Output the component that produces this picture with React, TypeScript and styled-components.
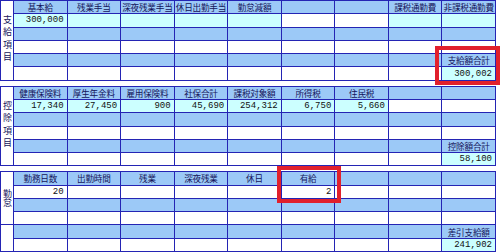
import { createGlobalStyle } from 'styled-components';
import styled from 'styled-components';

const GlobalStyle = createGlobalStyle`
  html, body {
    margin: 0;
    padding: 0;
    background: #ffffff;
  }
  body {
    font-family: "Noto Sans CJK JP", "Liberation Sans", sans-serif;
  }
`;

type Tone = 'head' | 'cyan' | 'white' | 'blue';

const toneColor: Record<Tone, string> = {
  head: '#9cc9f7',
  cyan: '#ccffff',
  white: '#ffffff',
  blue: '#9cc9f7',
};

const Page = styled.div`
  position: relative;
  width: 500px;
  height: 252px;
  overflow: hidden;
  display: flex;
  flex-direction: column;
  gap: 5px;
`;

const Section = styled.div`
  display: grid;
  grid-template-columns: 12px repeat(9, 1fr);
  grid-template-rows: repeat(6, 1fr);
  gap: 1px;
  padding: 1px;
  box-sizing: border-box;
  width: 496px;
  height: 81px;
  background: #2424b4;
`;

// vertical side caption (支給項目 etc.)
const Label = styled.div<{ $rows: string; $spacing: number }>`
  grid-column: 1;
  grid-row: ${(p) => p.$rows};
  background: #ffffff;
  display: flex;
  align-items: center;
  justify-content: center;
  overflow: hidden;
  font-size: 9px;
  line-height: 12px;
  color: #14145a;
  writing-mode: vertical-rl;
  text-orientation: upright;
  letter-spacing: ${(p) => p.$spacing}px;
`;

const Cell = styled.div<{ $tone: Tone }>`
  background: ${(p) => toneColor[p.$tone]};
  overflow: hidden;
  white-space: nowrap;
  display: flex;
  align-items: center;
  justify-content: ${(p) => (p.$tone === 'head' ? 'center' : 'flex-end')};
  padding-right: ${(p) => (p.$tone === 'head' ? 0 : 3)}px;
  font-size: ${(p) => (p.$tone === 'head' ? '8.6px' : '9px')};
  letter-spacing: ${(p) => (p.$tone === 'head' ? '-0.2px' : '0')};
  font-family: ${(p) =>
    p.$tone === 'head'
      ? '"Noto Sans CJK JP", "Liberation Sans", sans-serif'
      : '"Liberation Mono", monospace'};
  color: ${(p) => (p.$tone === 'head' ? '#14145a' : '#111111')};
`;

const Highlight = styled.div<{ $x: number; $y: number; $w: number; $h: number }>`
  position: absolute;
  left: ${(p) => p.$x}px;
  top: ${(p) => p.$y}px;
  width: ${(p) => p.$w}px;
  height: ${(p) => p.$h}px;
  box-sizing: border-box;
  border: 4px solid #e1202c;
  pointer-events: none;
`;

interface ICellData {
  tone: Tone;
  text?: string;
}

interface ISectionData {
  labels: { chars: string; rows: string; spacing: number }[];
  rows: ICellData[][];
}

const H = (text = ''): ICellData => ({ tone: 'head', text });
const C = (text = ''): ICellData => ({ tone: 'cyan', text });
const W = (text = ''): ICellData => ({ tone: 'white', text });
const B = (): ICellData => ({ tone: 'blue' });

const blueRow = (last: ICellData = B()) => [B(), B(), B(), B(), B(), B(), B(), B(), last];
const whiteRow = (last: ICellData = W()) => [W(), W(), W(), W(), W(), W(), W(), W(), last];

const sections: ISectionData[] = [
  {
    labels: [{ chars: '支給項目', rows: '1 / span 6', spacing: 3.5 }],
    rows: [
      [H('基本給'), H('残業手当'), H('深夜残業手当'), H('休日出勤手当'), H('勤怠減額'), H(), H(), H('課税通勤費'), H('非課税通勤費')],
      [C('300,000'), C(), C(), C(), C(), W(), W(), C(), C()],
      blueRow(),
      whiteRow(),
      blueRow(H('支給額合計')),
      whiteRow(C('300,002')),
    ],
  },
  {
    labels: [{ chars: '控除項目', rows: '1 / span 6', spacing: 3.5 }],
    rows: [
      [H('健康保険料'), H('厚生年金料'), H('雇用保険料'), H('社保合計'), H('課税対象額'), H('所得税'), H('住民税'), H(), H()],
      [C('17,340'), C('27,450'), C('900'), C('45,690'), C('254,312'), C('6,750'), C('5,660'), W(), W()],
      blueRow(),
      whiteRow(),
      blueRow(H('控除額合計')),
      whiteRow(C('58,100')),
    ],
  },
  {
    labels: [
      { chars: '勤怠', rows: '1 / span 4', spacing: 0 },
      { chars: '', rows: '5 / span 2', spacing: 0 },
    ],
    rows: [
      [H('勤務日数'), H('出勤時間'), H('残業'), H('深夜残業'), H('休日'), H('有給'), H(), H(), H()],
      [W('20'), W(), W(), W(), W(), W('2'), W(), W(), W()],
      blueRow(),
      whiteRow(),
      blueRow(H('差引支給額')),
      whiteRow(C('241,902')),
    ],
  },
];

export default function App() {
  return (
    <>
      <GlobalStyle />
      <Page>
        {sections.map((section, sIdx) => (
          <Section key={sIdx}>
            {section.labels.map((label, lIdx) => (
              <Label key={'l' + lIdx} $rows={label.rows} $spacing={label.spacing}>
                {label.chars}
              </Label>
            ))}
            {section.rows.map((row, rIdx) =>
              row.map((cell, cIdx) => (
                <Cell key={rIdx * 9 + cIdx} $tone={cell.tone}>
                  {cell.text}
                </Cell>
              ))
            )}
          </Section>
        ))}
        <Highlight $x={435} $y={46} $w={65} $h={39} />
        <Highlight $x={277} $y={166} $w={64} $h={37} />
      </Page>
    </>
  );
}
